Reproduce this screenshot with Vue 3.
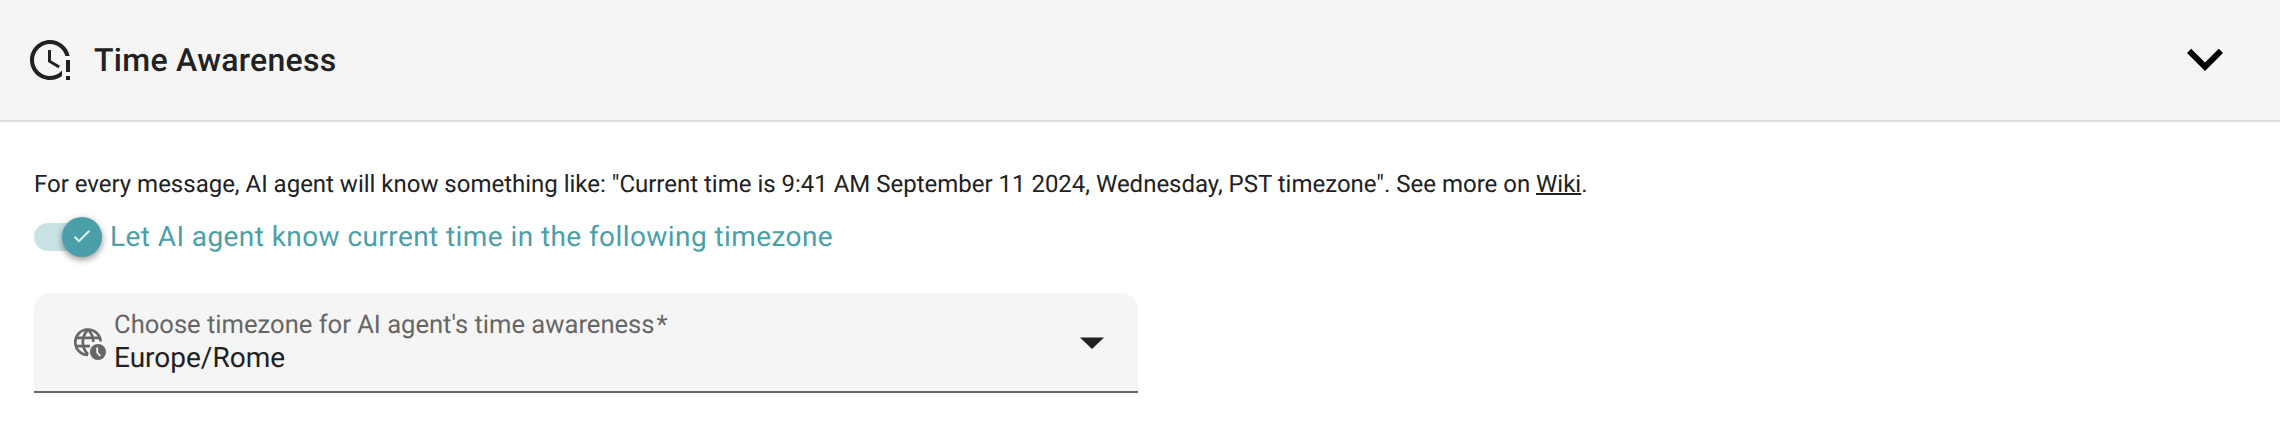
<script setup>
import { ref } from 'vue'

const enabled = ref(true)
const timezone = ref('Europe/Rome')
</script>

<template>
  <section class="panel">
    <header class="header">
      <svg class="clock" viewBox="0 0 24 24">
        <path d="M11 7V13L16.2 16.1L17 14.9L12.5 12.2V7H11M20 12V18H22V12H20M20 20V22H22V20H20M18 20C16.3 21.3 14.3 22 12 22C6.5 22 2 17.5 2 12C2 6.5 6.5 2 12 2C16.8 2 20.9 5.4 21.8 10H19.7C18.8 6.6 15.7 4 12 4C7.6 4 4 7.6 4 12C4 16.4 7.6 20 12 20C14.4 20 16.5 18.9 18 17.3V20Z" />
      </svg>
      <h2 class="title">Time Awareness</h2>
      <svg class="chevron" viewBox="0 0 24 24">
        <path d="M7.41 8.58 12 13.17 16.59 8.58 18 10 12 16 6 10Z" />
      </svg>
    </header>

    <div class="body">
      <p class="hint">For every message, AI agent will know something like: "Current time is 9:41 AM September 11 2024, Wednesday, PST timezone". See more on <a class="wiki">Wiki</a>.</p>

      <div class="toggle" role="switch" :aria-checked="enabled" @click="enabled = !enabled">
        <span class="track">
          <span class="thumb">
            <svg viewBox="0 0 18 14"><path d="M1.5 7.8 6 12.2 16.3 1.8" /></svg>
          </span>
        </span>
        <span class="toggle-label">Let AI agent know current time in the following timezone</span>
      </div>

      <div class="select">
        <svg class="globe" viewBox="0 0 32 32">
          <g fill="none" stroke="#666" stroke-width="2.7">
            <path d="M26.6 13.5A12.7 12.7 0 1 0 14 26.9" />
            <path d="M2 9.8H26M2 18.2H16M14 1.5C7 9 7 19 14 26.5M14 1.5C17.5 5 19.3 9 19.3 14" />
          </g>
          <circle cx="24" cy="24" r="8" fill="#666" />
          <path d="M23.2 19.5V24.5L26.3 28" fill="none" stroke="#f5f5f5" stroke-width="1.8" />
        </svg>
        <div class="field">
          <span class="field-label">Choose timezone for AI agent's time awareness<span class="star">*</span></span>
          <span class="value">{{ timezone }}</span>
        </div>
        <svg class="arrow" viewBox="0 0 24 12"><path d="M0 0.4H24L12 12Z" /></svg>
      </div>
    </div>
  </section>
</template>

<style>
body {
  background: #fff;
}
</style>

<style scoped>
.panel {
  font-family: Roboto, "Liberation Sans", sans-serif;
  color: #212121;
  text-rendering: geometricPrecision;
}
.header {
  box-sizing: border-box;
  height: 122px;
  padding: 0 39px 0 26px;
  display: flex;
  align-items: center;
  background: #f5f5f5;
  border-bottom: 2px solid #dedede;
}
.clock {
  width: 48px;
  height: 48px;
  fill: #212121;
}
.title {
  margin: 0 auto 0 20px;
  font-size: 32px;
  line-height: 48px;
  font-weight: 500;
  letter-spacing: 0.3px;
}
.chevron {
  width: 72px;
  height: 72px;
  margin-top: -2px;
}
.body {
  padding: 44px 34px 0;
}
.hint {
  margin: 0;
  font-size: 24px;
  line-height: 36px;
  letter-spacing: -0.01px;
  white-space: nowrap;
}
.wiki {
  text-decoration: underline;
  text-decoration-thickness: 2px;
}
.toggle {
  margin-top: 15px;
  height: 40px;
  display: flex;
  align-items: center;
}
.track {
  width: 68px;
  height: 28px;
  border-radius: 14px;
  background: #c9e3e4;
  display: flex;
  align-items: center;
  justify-content: flex-end;
}
.thumb {
  flex: none;
  width: 40px;
  height: 40px;
  border-radius: 50%;
  background: #4a9fa8;
  box-shadow: 0 3px 6px rgba(0, 0, 0, 0.32), 0 1px 8px rgba(0, 0, 0, 0.12);
  display: flex;
  align-items: center;
  justify-content: center;
}
.thumb svg {
  width: 18px;
  height: 14px;
  margin-top: -2px;
  fill: none;
  stroke: #e4f1f2;
  stroke-width: 2;
}
.toggle-label {
  margin-left: 8px;
  font-size: 28px;
  line-height: 40px;
  letter-spacing: 0.42px;
  color: #4a9fa8;
  white-space: nowrap;
}
.select {
  margin-top: 36px;
  box-sizing: border-box;
  width: 1104px;
  height: 100px;
  padding: 0 34px 0 40px;
  display: flex;
  align-items: center;
  background: #f5f5f5;
  border-bottom: 2px solid #666;
  border-radius: 16px 16px 0 0;
}
.globe {
  width: 32px;
  height: 32px;
  margin-top: 3px;
}
.field {
  margin-left: 8px;
  flex: 1;
  display: flex;
  flex-direction: column;
}
.field-label {
  font-size: 25.6px;
  line-height: 32px;
  letter-spacing: -0.01px;
  color: #666;
}
.star {
  margin-left: 2px;
}
.value {
  font-size: 28px;
  line-height: 34px;
}
.arrow {
  width: 24px;
  height: 12px;
  margin-top: 2px;
  fill: #212121;
}
</style>
